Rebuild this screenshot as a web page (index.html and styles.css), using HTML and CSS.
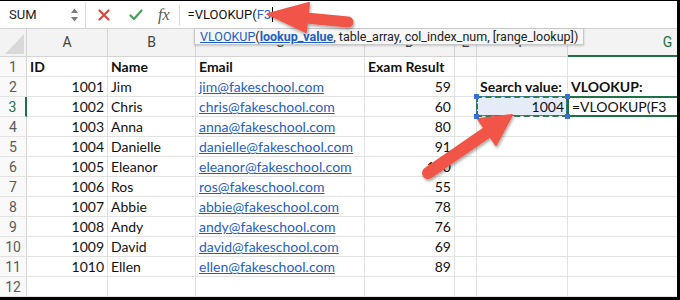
FILE: index.html
```html
<!DOCTYPE html>
<html lang="en">
  <head>
    <meta charset="UTF-8" />
    <meta name="viewport" content="width=device-width, initial-scale=1.0" />
    <title>VLOOKUP</title>
    <link rel="stylesheet" href="styles.css">
  </head>
  <body>
    <div class="app">
      <!-- barre de formule -->
      <div class="formula-bar">
        <div class="name-box">
          <span class="name">SUM</span>
          <svg class="spin" width="9" height="16" viewBox="0 0 9 16">
            <path d="M4.5 1.5 L8 6 H1 Z M4.5 14.5 L8 10 H1 Z" fill="#7a7a7a" />
          </svg>
        </div>
        <div class="tools">
          <svg class="cancel" width="12" height="12" viewBox="0 0 12 12">
            <path d="M1.5 1.5 L10.5 10.5 M10.5 1.5 L1.5 10.5" stroke="#e0483c" stroke-width="2.2" stroke-linecap="round" />
          </svg>
          <svg class="enter" width="14" height="12" viewBox="0 0 14 12">
            <path d="M1.5 6.5 L5 10 L12.5 1.5" fill="none" stroke="#45a05a" stroke-width="2.2" stroke-linecap="round" stroke-linejoin="round" />
          </svg>
          <span class="fx">fx</span>
        </div>
        <div class="formula">=VLOOKUP(<span class="ref">F3</span><span class="caret"></span></div>
      </div>

      <!-- la feuille -->
      <div class="sheet">
        <div class="c h corner">
          <svg width="26" height="27" viewBox="0 0 26 27"><path d="M5 25 L24 25 L24 5 Z" fill="#d9d9d9" /></svg>
        </div>
        <div class="c h">A</div>
        <div class="c h">B</div>
        <div class="c h">C</div>
        <div class="c h">D</div>
        <div class="c h">E</div>
        <div class="c h">F</div>
        <div class="c h active-col">G</div>

        <div class="c r">1</div>
        <div class="c b">ID</div>
        <div class="c b">Name</div>
        <div class="c b">Email</div>
        <div class="c b">Exam Result</div>
        <div class="c"></div><div class="c"></div><div class="c"></div>

        <div class="c r">2</div>
        <div class="c n">1001</div>
        <div class="c">Jim</div>
        <div class="c"><span class="link">jim@fakeschool.com</span></div>
        <div class="c n">59</div>
        <div class="c"></div>
        <div class="c b">Search value:</div>
        <div class="c b">VLOOKUP:</div>

        <div class="c r active-row">3</div>
        <div class="c n">1002</div>
        <div class="c">Chris</div>
        <div class="c"><span class="link">chris@fakeschool.com</span></div>
        <div class="c n">60</div>
        <div class="c"></div>
        <div class="c n picked">
          1004
          <span class="handle tl"></span><span class="handle tr"></span>
          <span class="handle bl"></span><span class="handle br"></span>
        </div>
        <div class="c editing">=VLOOKUP(F3</div>

        <div class="c r">4</div>
        <div class="c n">1003</div>
        <div class="c">Anna</div>
        <div class="c"><span class="link">anna@fakeschool.com</span></div>
        <div class="c n">80</div>
        <div class="c"></div><div class="c"></div><div class="c"></div>

        <div class="c r">5</div>
        <div class="c n">1004</div>
        <div class="c">Danielle</div>
        <div class="c"><span class="link">danielle@fakeschool.com</span></div>
        <div class="c n">91</div>
        <div class="c"></div><div class="c"></div><div class="c"></div>

        <div class="c r">6</div>
        <div class="c n">1005</div>
        <div class="c">Eleanor</div>
        <div class="c"><span class="link">eleanor@fakeschool.com</span></div>
        <div class="c n">100</div>
        <div class="c"></div><div class="c"></div><div class="c"></div>

        <div class="c r">7</div>
        <div class="c n">1006</div>
        <div class="c">Ros</div>
        <div class="c"><span class="link">ros@fakeschool.com</span></div>
        <div class="c n">55</div>
        <div class="c"></div><div class="c"></div><div class="c"></div>

        <div class="c r">8</div>
        <div class="c n">1007</div>
        <div class="c">Abbie</div>
        <div class="c"><span class="link">abbie@fakeschool.com</span></div>
        <div class="c n">78</div>
        <div class="c"></div><div class="c"></div><div class="c"></div>

        <div class="c r">9</div>
        <div class="c n">1008</div>
        <div class="c">Andy</div>
        <div class="c"><span class="link">andy@fakeschool.com</span></div>
        <div class="c n">76</div>
        <div class="c"></div><div class="c"></div><div class="c"></div>

        <div class="c r">10</div>
        <div class="c n">1009</div>
        <div class="c">David</div>
        <div class="c"><span class="link">david@fakeschool.com</span></div>
        <div class="c n">69</div>
        <div class="c"></div><div class="c"></div><div class="c"></div>

        <div class="c r">11</div>
        <div class="c n">1010</div>
        <div class="c">Ellen</div>
        <div class="c"><span class="link">ellen@fakeschool.com</span></div>
        <div class="c n">89</div>
        <div class="c"></div><div class="c"></div><div class="c"></div>

        <div class="c r">12</div>
        <div class="c"></div><div class="c"></div><div class="c"></div><div class="c"></div>
        <div class="c"></div><div class="c"></div><div class="c"></div>
      </div>

      <!-- infobulle de la fonction -->
      <div class="tip">
        <span class="tip-fn">VLOOKUP</span>(<span class="tip-arg">lookup_value</span>, table_array, col_index_num, [range_lookup])
      </div>

      <!-- fleches rouges -->
      <svg class="arrows" width="680" height="300" viewBox="0 0 680 300">
        <defs>
          <filter id="shadow" x="-20%" y="-20%" width="140%" height="140%">
            <feDropShadow dx="1" dy="2" stdDeviation="1.5" flood-color="#000" flood-opacity="0.35" />
          </filter>
        </defs>
        <g filter="url(#shadow)" fill="#f05447" stroke="#f05447">
          <line x1="348" y1="22" x2="306" y2="18" stroke-width="11" stroke-linecap="round" />
          <polygon points="268,14 309,3 306,32" stroke-width="2" stroke-linejoin="round" />
          <line x1="428" y1="173" x2="489" y2="131" stroke-width="12" stroke-linecap="round" />
          <polygon points="512,115 496,145 478,119" stroke-width="2" stroke-linejoin="round" />
        </g>
      </svg>
    </div>
  </body>
</html>
```

FILE: styles.css
```css
body {
  margin: 0;
  padding: 0;
  background-color: #fff;
}
.app {
  position: relative;
  width: 680px;
  height: 300px;
  box-sizing: border-box;
  border-top: 1px solid #000;
  border-right: 3px solid #000;
  border-bottom: 3px solid #000;
  overflow: hidden;
  background-color: #fff;
  font-family: Roboto, "Liberation Sans", sans-serif;
}

/* barre de formule */
.formula-bar {
  display: flex;
  align-items: center;
  height: 28px;
  box-sizing: border-box;
  border-bottom: 1px solid #d2d2d2;
}
.name-box {
  display: flex;
  align-items: center;
  justify-content: space-between;
  width: 86px;
  height: 26px;
  box-sizing: border-box;
  padding: 0 6px 0 9px;
  border-right: 1px solid #dcdcdc;
}
.name {
  font-size: 13px;
  color: #222;
}
.tools {
  display: flex;
  align-items: center;
  height: 20px;
  padding: 0 0 0 12px;
  border-right: 1px solid #d6d6d6;
}
.cancel {
  margin-right: 19px;
}
.enter {
  margin-right: 15px;
}
.fx {
  font-family: "Liberation Serif", serif;
  font-style: italic;
  font-size: 16px;
  color: #555;
  margin-right: 9px;
}
.formula {
  display: flex;
  align-items: center;
  padding-left: 8px;
  font-size: 13px;
  color: #111;
}
.ref {
  color: #2a68d4;
}
.caret {
  display: inline-block;
  width: 1px;
  height: 15px;
  margin-left: 1px;
  background-color: #000;
}

/* feuille */
.sheet {
  display: grid;
  grid-template-columns: 27px 81px 88px 169px 90px 22px 91px 200px;
  grid-template-rows: 28px;
  grid-auto-rows: 20px;
}
.c {
  position: relative;
  box-sizing: border-box;
  padding: 0 3px;
  border-right: 1px solid #e2e2e2;
  border-bottom: 1px solid #e2e2e2;
  font-family: Lato, "Open Sans", sans-serif;
  font-size: 14px;
  line-height: 20px;
  color: #111;
  white-space: nowrap;
}
.h {
  background-color: #f3f3f3;
  border-color: #d4d4d4;
  text-align: center;
  font-family: Roboto, "Liberation Sans", sans-serif;
  font-size: 14px;
  line-height: 27px;
  color: #444;
}
.corner {
  padding: 0;
}
.corner svg {
  display: block;
}
.r {
  background-color: #f9f9f9;
  border-right-color: #d4d4d4;
  text-align: center;
  font-family: Roboto, "Liberation Sans", sans-serif;
  font-size: 14px;
  color: #5a5a5a;
}
.b {
  font-weight: bold;
}
.n {
  text-align: right;
}
.link {
  color: #1f5fc4;
  text-decoration: underline;
}

/* selection */
.active-col {
  color: #1e7145;
  border-bottom: 2px solid #1e7145;
}
.active-row {
  color: #1e7145;
  border-right: 2px solid #1e7145;
}
.picked {
  background-color: #e6ecf7;
}
.picked::before {
  content: "";
  position: absolute;
  top: -1px;
  left: -1px;
  right: 0;
  bottom: 0;
  border: 1px solid #4a78d8;
}
.picked::after {
  content: "";
  position: absolute;
  top: -1px;
  left: -1px;
  right: -1px;
  bottom: -1px;
  border: 2px dashed #2f7d4b;
}
.handle {
  position: absolute;
  width: 5px;
  height: 5px;
  background-color: #3a6fd6;
  z-index: 2;
}
.tl { top: -3px; left: -3px; }
.tr { top: -3px; right: -3px; }
.bl { bottom: -3px; left: -3px; }
.br { bottom: -3px; right: -3px; }
.editing {
  padding-left: 4px;
}
.editing::after {
  content: "";
  position: absolute;
  top: -1px;
  left: -1px;
  right: -3px;
  bottom: -1px;
  border: 2px solid #1e7145;
  border-right: none;
}

/* infobulle */
.tip {
  position: absolute;
  left: 194px;
  top: 27px;
  height: 17px;
  box-sizing: border-box;
  padding: 0 5px;
  background-color: #f6f6f6;
  border: 1px solid #c8c8c8;
  box-shadow: 0 1px 2px rgba(0, 0, 0, 0.18);
  font-size: 12.5px;
  line-height: 15px;
  color: #222;
  white-space: nowrap;
}
.tip-fn,
.tip-arg {
  color: #1f5fc4;
  text-decoration: underline;
}
.tip-arg {
  font-weight: bold;
}

.arrows {
  position: absolute;
  top: -1px;
  left: 0;
  pointer-events: none;
}
```
